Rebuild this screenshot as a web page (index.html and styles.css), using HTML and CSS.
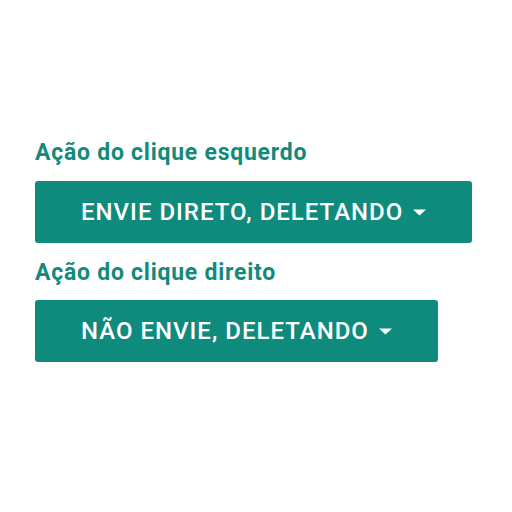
FILE: index.html
```html
<!DOCTYPE html>
<html>
<head>
<meta charset="utf-8">
<link rel="stylesheet" href="styles.css">
</head>
<body>
<div class="panel">
  <div class="field">
    <div class="label">Ação do clique esquerdo</div>
    <button class="btn">ENVIE DIRETO, DELETANDO <svg class="caret" width="13" height="7" viewBox="0 0 13 7"><path d="M0 0.5h13L6.5 6.5z" fill="#fff"/></svg></button>
  </div>
  <div class="field field-tight">
    <div class="label">Ação do clique direito</div>
    <button class="btn">NÃO ENVIE, DELETANDO <svg class="caret" width="13" height="7" viewBox="0 0 13 7"><path d="M0 0.5h13L6.5 6.5z" fill="#fff"/></svg></button>
  </div>
</div>
</body>
</html>
```
FILE: styles.css
```css
html, body { margin: 0; padding: 0; background: #fff; }
body { font-family: Roboto, "Noto Sans", sans-serif; }
.panel { padding: 139px 35px 0 35px; display: flex; flex-direction: column; gap: 16px; }
.field { display: flex; flex-direction: column; align-items: flex-start; gap: 15px; }
.field-tight { gap: 14px; }
.label { color: #138a7b; font-size: 23px; font-weight: 700; line-height: 27px; letter-spacing: 0.75px; }
.btn {
  background: #0f8b7d; color: #fff; border: none; border-radius: 3px;
  font-family: Roboto, sans-serif; font-weight: 500; font-size: 24px;
  height: 62px; padding: 0 46px; display: flex; align-items: center; gap: 10px;
  letter-spacing: 1px;
}
.caret { display: block; margin-top: 1px; }
```
